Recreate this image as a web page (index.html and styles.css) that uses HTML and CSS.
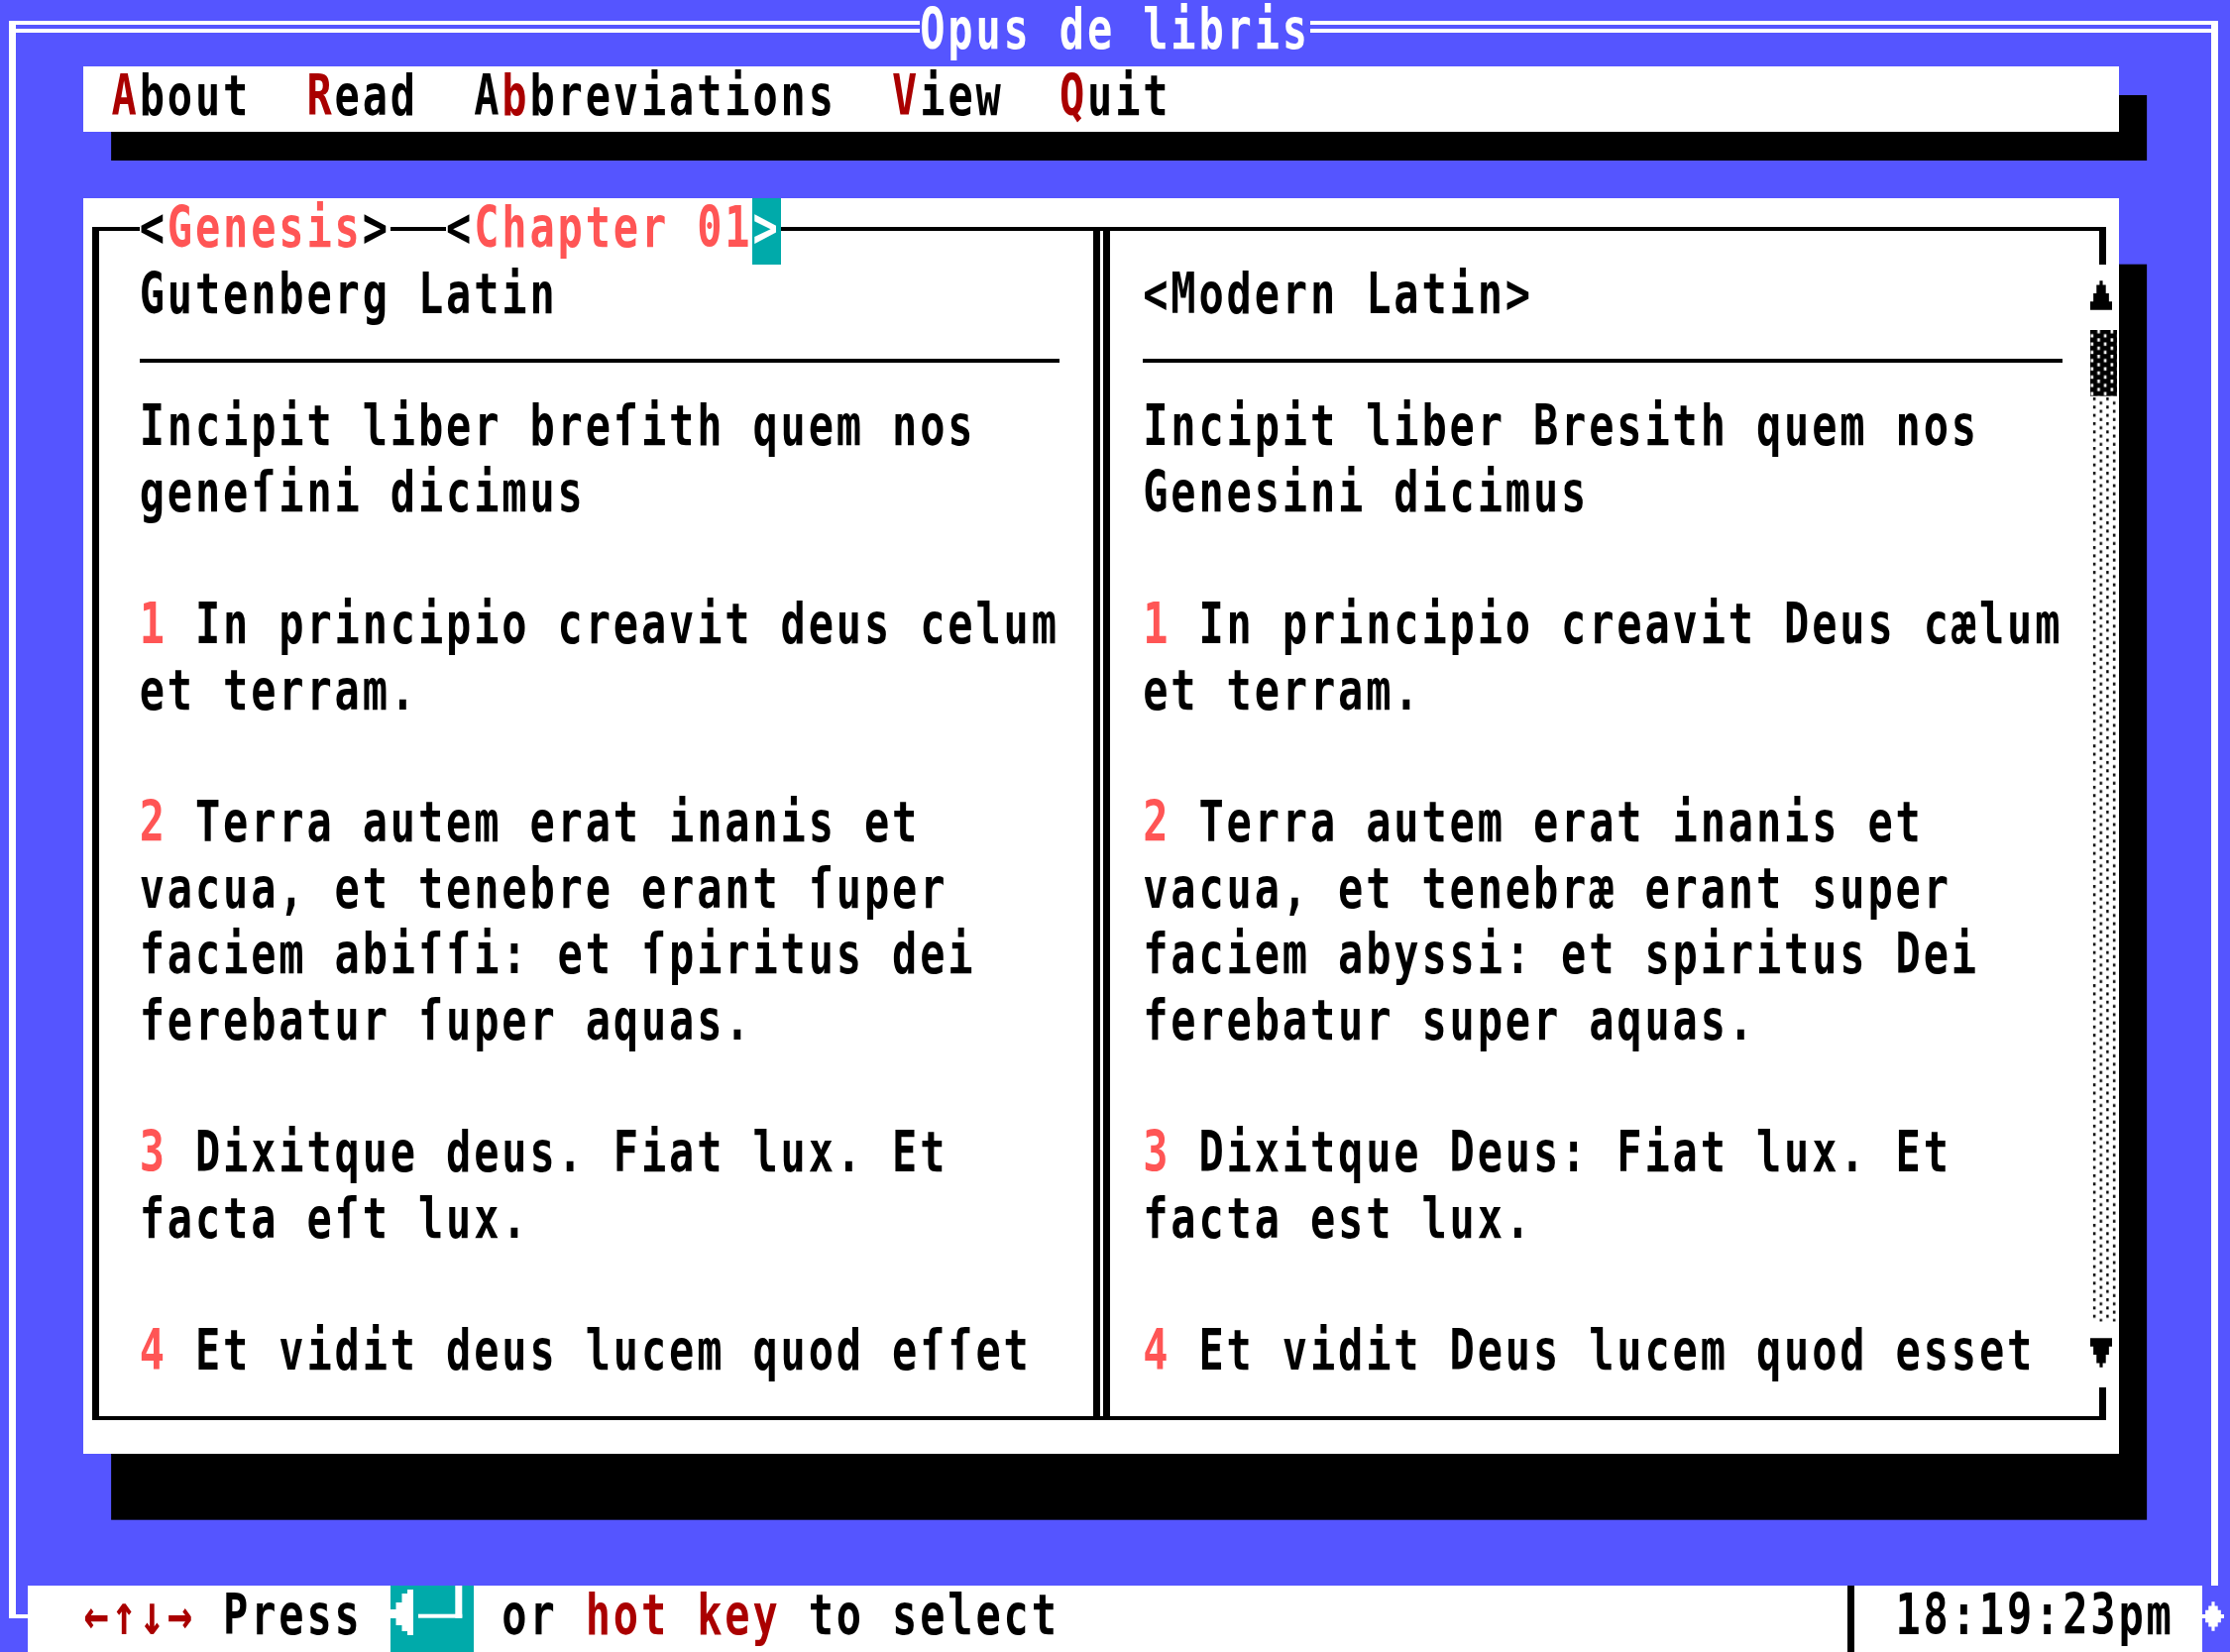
FILE: index.html
```html
<!DOCTYPE html>
<html lang="la">
<head>
<meta charset="utf-8">
<title>Opus de libris</title>
<link rel="stylesheet" href="styles.css">
</head>
<body>
<div class="screen">
  <div class="dline dline-l"></div>
  <h1 class="title"><span class="t">Opus de libris</span></h1>
  <div class="dline dline-r"></div>
  <div class="vline vline-l"></div>
  <div class="vline vline-r"></div>
  <div class="corner-bl"></div>

  <nav class="menu">
    <div class="menu-list">
      <span class="t"><b class="hk">A</b>bout</span>
      <span class="t"><b class="hk">R</b>ead</span>
      <span class="t">A<b class="hk">b</b>breviations</span>
      <span class="t"><b class="hk">V</b>iew</span>
      <span class="t"><b class="hk">Q</b>uit</span>
    </div>
  </nav>

  <main class="panel">
    <div class="frame"></div>
    <div class="crumbs">
      <div class="crumb"><span class="t">&lt;<em>Genesis</em>&gt;</span></div>
      <div class="crumb"><span class="t">&lt;<em>Chapter 01</em></span><span class="cursor"><span class="t">&gt;</span></span></div>
    </div>
    <div class="divider"></div>

    <article class="pane pane-l">
      <h2 class="ln">Gutenberg Latin</h2>
      <div class="rule"></div>
      <p><span class="ln">Incipit liber breſith quem nos</span><span class="ln">geneſini dicimus</span></p>
      <p><span class="ln"><span class="vn">1</span> In principio creavit deus celum</span><span class="ln">et terram.</span></p>
      <p><span class="ln"><span class="vn">2</span> Terra autem erat inanis et</span><span class="ln">vacua, et tenebre erant ſuper</span><span class="ln">faciem abiſſi: et ſpiritus dei</span><span class="ln">ferebatur ſuper aquas.</span></p>
      <p><span class="ln"><span class="vn">3</span> Dixitque deus. Fiat lux. Et</span><span class="ln">facta eſt lux.</span></p>
      <p><span class="ln"><span class="vn">4</span> Et vidit deus lucem quod eſſet</span></p>
    </article>

    <article class="pane pane-r">
      <h2 class="ln">&lt;Modern Latin&gt;</h2>
      <div class="rule"></div>
      <p><span class="ln">Incipit liber Bresith quem nos</span><span class="ln">Genesini dicimus</span></p>
      <p><span class="ln"><span class="vn">1</span> In principio creavit Deus cælum</span><span class="ln">et terram.</span></p>
      <p><span class="ln"><span class="vn">2</span> Terra autem erat inanis et</span><span class="ln">vacua, et tenebræ erant super</span><span class="ln">faciem abyssi: et spiritus Dei</span><span class="ln">ferebatur super aquas.</span></p>
      <p><span class="ln"><span class="vn">3</span> Dixitque Deus: Fiat lux. Et</span><span class="ln">facta est lux.</span></p>
      <p><span class="ln"><span class="vn">4</span> Et vidit Deus lucem quod esset</span></p>
    </article>

    <div class="scrollbar">
      <div class="sb-btn">
        <svg width="22" height="30" viewBox="0 0 21.875 29.2"><path d="M9.375 0H12.5V4.17H15.625V12.5H18.75V20.85H21.875V29.2H0V20.85H3.125V12.5H6.25V4.17H9.375Z" fill="#000"/></svg>
      </div>
      <div class="sb-thumb">
        <svg class="shade" width="100%" height="100%"><defs><pattern id="dk" width="13.33" height="8.34" patternUnits="userSpaceOnUse"><rect width="13.33" height="8.34" fill="#000"/><rect x="7.2" y="0" width="2.6" height="3.4" fill="#fff"/><rect x="0.5" y="4.17" width="2.6" height="3.4" fill="#fff"/></pattern></defs><rect width="100%" height="100%" fill="url(#dk)"/></svg>
      </div>
      <div class="sb-track">
        <svg class="shade" width="100%" height="100%"><defs><pattern id="lt" width="13.33" height="8.34" patternUnits="userSpaceOnUse"><rect x="2.9" y="1" width="2.4" height="3" fill="#000"/><rect x="9.6" y="5.17" width="2.4" height="3" fill="#000"/></pattern></defs><rect width="100%" height="100%" fill="url(#lt)"/></svg>
      </div>
      <div class="sb-btn">
        <svg width="22" height="30" viewBox="0 0 21.875 29.2"><path d="M0 0H21.875V8.34H18.75V16.67H15.625V25H12.5V29.2H9.375V25H6.25V16.67H3.125V8.34H0Z" fill="#000"/></svg>
      </div>
    </div>
  </main>

  <footer class="status">
    <div class="hint">
      <span class="t hk">←↑↓→</span>
      <span class="t"> Press </span>
      <span class="enter">
        <svg width="84.375" height="66.68" viewBox="0 0 84.375 66.68"><path d="M0 24H5.5V17H11.5V8H17V4H23V50H17V46H11.5V40H5.5V33H0Z" fill="#fff"/><rect x="28" y="28.7" width="44.3" height="4" fill="#fff"/><rect x="65.3" y="0" width="7" height="32.7" fill="#fff"/></svg>
      </span>
      <span class="t"> or </span>
      <span class="t hk">hot key</span>
      <span class="t"> to select</span>
    </div>
    <div class="sep"></div>
    <span class="t clock">18:19:23pm</span>
  </footer>
  <div class="diamond">
    <svg width="22" height="30" viewBox="0 0 21.875 29.2"><path d="M9.375 0H12.5V4.17H15.625V8.34H18.75V12.5H21.875V16.67H18.75V20.85H15.625V25H12.5V29.2H9.375V25H6.25V20.85H3.125V16.67H0V12.5H3.125V8.34H6.25V4.17H9.375Z" fill="#fff"/></svg>
  </div>
</div>
</body>
</html>
```

FILE: styles.css
```css
* { box-sizing: border-box; }

html, body {
  margin: 0;
  padding: 0;
  background: #5555ff;
}

body {
  width: 2250px;
  height: 1667px;
  overflow: hidden;
}

.screen {
  width: 2250px;
  height: 1667px;
  display: grid;
  grid-template-columns: repeat(80, minmax(0, 1fr));
  grid-template-rows: repeat(25, minmax(0, 1fr));
  font-family: "DejaVu Sans Mono", monospace;
  font-weight: bold;
  font-size: 42px;
  letter-spacing: 2.839px;
  line-height: 66.68px;
  color: #000;
}

/* text-mode glyph stretch: 9x16 cells are tall and narrow */
.t, .ln {
  display: inline-block;
  white-space: pre;
  height: 66.68px;
  line-height: 66.68px;
  transform-origin: 0 47.84px;
  transform: translateY(2.16px) scaleY(1.36);
}
.ln { display: block; }

b, em { font-weight: inherit; font-style: normal; }
.hk { color: #aa0000; }
.vn, em { color: #ff5555; }

/* ---------- outer window frame ---------- */
.dline {
  grid-row: 1;
  align-self: start;
  height: 0;
  margin-top: 21px;
  border-top: 12px double #fff;
}
.dline-l { grid-column: 1 / 34; margin-left: 9px; }
.dline-r { grid-column: 48 / 81; margin-right: 12px; }

.title {
  grid-column: 34 / 48;
  grid-row: 1;
  margin: 0;
  font: inherit;
  color: #fff;
}

.vline {
  width: 7px;
  background: #fff;
  margin-top: 21px;
}
.vline-l {
  grid-column: 1;
  grid-row: 1 / 26;
  margin-left: 9px;
  margin-bottom: 34px;
}
.vline-r {
  grid-column: 80;
  grid-row: 1 / 25;
  margin-left: 9.1px;
}
.corner-bl {
  grid-column: 1;
  grid-row: 25;
  align-self: start;
  height: 4px;
  margin: 28.7px 0 0 9px;
  background: #fff;
}

/* ---------- menu bar ---------- */
.menu {
  grid-column: 4 / 77;
  grid-row: 2;
  background: #fff;
  box-shadow: 28.125px 29px 0 #000;
}
.menu-list {
  display: flex;
  gap: 56.25px;
  padding-left: 28.125px;
}

/* ---------- main reading panel ---------- */
.panel {
  grid-column: 4 / 77;
  grid-row: 4 / 23;
  background: #fff;
  box-shadow: 28.125px 66.68px 0 #000;
  display: grid;
  grid-template-columns: repeat(73, minmax(0, 1fr));
  grid-template-rows: repeat(19, minmax(0, 1fr));
}

.frame {
  grid-column: 1 / -1;
  grid-row: 1 / -1;
  margin: 29px 12.1px 34px 9px;
  border-style: solid;
  border-color: #000;
  border-width: 4px 7px;
}

.crumbs {
  grid-column: 3 / 26;
  grid-row: 1;
  display: flex;
  gap: 56.25px;
}
.crumb {
  display: flex;
  background: #fff;
}
.cursor {
  display: flex;
  background: #00aaaa;
  color: #fff;
}

.divider {
  grid-column: 37 / 38;
  grid-row: 1 / -1;
  width: 17.3px;
  margin: 29px 0 34px 5.8px;
  border-left: 7.3px solid #000;
  border-right: 7.3px solid #000;
}

.pane {
  grid-row: 2 / 19;
}
.pane-l { grid-column: 3 / 36; }
.pane-r { grid-column: 39 / 72; }

.pane h2 {
  margin: 0;
  font: inherit;
}
.pane p {
  margin: 0 0 66.68px;
}
.rule {
  height: 66.68px;
  padding-top: 29px;
}
.rule::before {
  content: "";
  display: block;
  height: 4px;
  background: #000;
}

.scrollbar {
  grid-column: 73 / 74;
  grid-row: 2 / 19;
  background: #fff;
  display: flex;
  flex-direction: column;
}
.sb-btn {
  height: 66.68px;
  flex: none;
  padding-top: 16.2px;
}
.sb-btn svg { display: block; }
.sb-thumb {
  height: 66.68px;
  flex: none;
  width: 27px;
}
.sb-track {
  flex: 1;
}
.shade {
  display: block;
  width: 100%;
  height: 100%;
}

/* ---------- status line ---------- */
.status {
  grid-column: 2 / 80;
  grid-row: 25;
  background: #fff;
  display: flex;
  padding: 0 28.125px 0 56.25px;
}
.hint {
  flex: 1;
  display: flex;
}
.enter {
  flex: none;
  width: 84.375px;
  height: 66.68px;
  background: #00aaaa;
}
.enter svg { display: block; }
.sep {
  flex: none;
  width: 28.125px;
  background: linear-gradient(#000, #000) 8px 0 / 7px 100% no-repeat;
}
.clock {
  margin-left: 28.125px;
}

.diamond {
  grid-column: 80;
  grid-row: 25;
  padding-top: 15.7px;
}
.diamond svg { display: block; }
```
